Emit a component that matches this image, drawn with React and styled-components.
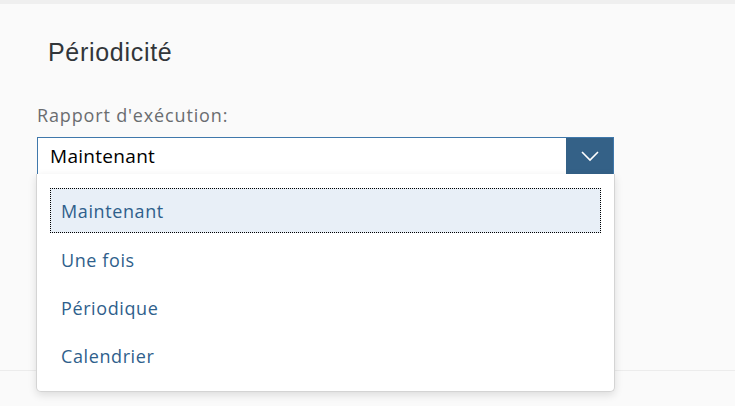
import React, { useState } from "react";
import styled, { createGlobalStyle } from "styled-components";

const GlobalStyle = createGlobalStyle`
  html, body {
    margin: 0;
    padding: 0;
    background: #fafafa;
  }
  * { box-sizing: border-box; }
`;

const options = ["Maintenant", "Une fois", "Périodique", "Calendrier"];

const App = () => {
  const [selected, setSelected] = useState(0);

  return (
    <>
      <GlobalStyle />
      <Page>
        <TopStrip />
        <Section>
          <Title>Périodicité</Title>
          <Label>Rapport d'exécution:</Label>
          <Field>
            <Combo>
              <ComboValue>{options[selected]}</ComboValue>
              <ArrowButton>
                <svg width="20" height="12" viewBox="0 0 20 12">
                  <path d="M2 2 L10 10 L18 2" fill="none" stroke="#fff" strokeWidth="1.6" />
                </svg>
              </ArrowButton>
            </Combo>
            <Popup>
              {options.map((opt, i) => (
                <Option key={opt} active={i === selected} onClick={() => setSelected(i)}>
                  {opt}
                </Option>
              ))}
            </Popup>
          </Field>
        </Section>
        <Footer />
      </Page>
    </>
  );
};
export default App;

// css
const Page = styled.div`
  width: 735px;
  height: 406px;
  overflow: hidden;
  background: #fafafa;
  display: flex;
  flex-direction: column;
`;
const TopStrip = styled.div`
  height: 4px;
  background: #efefef;
  flex-shrink: 0;
`;
const Section = styled.div`
  height: 367px;
  padding: 33px 0 0 37px;
  border-bottom: 1px solid #ececec;
  flex-shrink: 0;
`;
const Title = styled.h2`
  margin: 0 0 38px 11px;
  font-family: "Liberation Sans", Arial, sans-serif;
  font-weight: normal;
  font-size: 25px;
  letter-spacing: 0.7px;
  line-height: 30px;
  color: #32363a;
`;
const Label = styled.div`
  font-family: "Open Sans", "Noto Sans", sans-serif;
  font-size: 18px;
  letter-spacing: 0.85px;
  line-height: 20px;
  color: #6a6d70;
  margin-bottom: 12px;
`;
const Field = styled.div`
  position: relative;
  width: 577px;
`;
const Combo = styled.div`
  height: 38px;
  display: flex;
  border: 1px solid #3f78ab;
  background: #fff;
`;
const ComboValue = styled.div`
  flex: 1;
  padding-left: 12px;
  display: flex;
  align-items: center;
  font-family: "Open Sans", "Noto Sans", sans-serif;
  font-size: 19px;
  letter-spacing: 0.3px;
  color: #000;
`;
const ArrowButton = styled.div`
  width: 47px;
  background: #346187;
  display: flex;
  align-items: center;
  justify-content: center;
`;
const Popup = styled.div`
  position: absolute;
  left: -1px;
  top: 37px;
  width: 579px;
  height: 218px;
  background: #fff;
  border: 1px solid #d4d4d4;
  border-top: none;
  border-radius: 0 0 5px 5px;
  box-shadow: 0 3px 8px rgba(0, 0, 0, 0.12);
  padding: 14px 13px;
  display: flex;
  flex-direction: column;
`;
const Option = styled.div`
  height: 48px;
  flex-shrink: 0;
  display: flex;
  align-items: center;
  padding-left: 10px;
  font-family: "Open Sans", "Noto Sans", sans-serif;
  font-size: 18px;
  letter-spacing: 0.6px;
  color: #2f5f8c;
  cursor: pointer;
  background: ${({ active }) => (active ? "#e8eff7" : "transparent")};
  border: 1px dotted ${({ active }) => (active ? "#000" : "transparent")};
  &:first-child { height: 45px; margin-bottom: 3px; }
`;
const Footer = styled.div`
  flex: 1;
  background: #fafafa;
`;
